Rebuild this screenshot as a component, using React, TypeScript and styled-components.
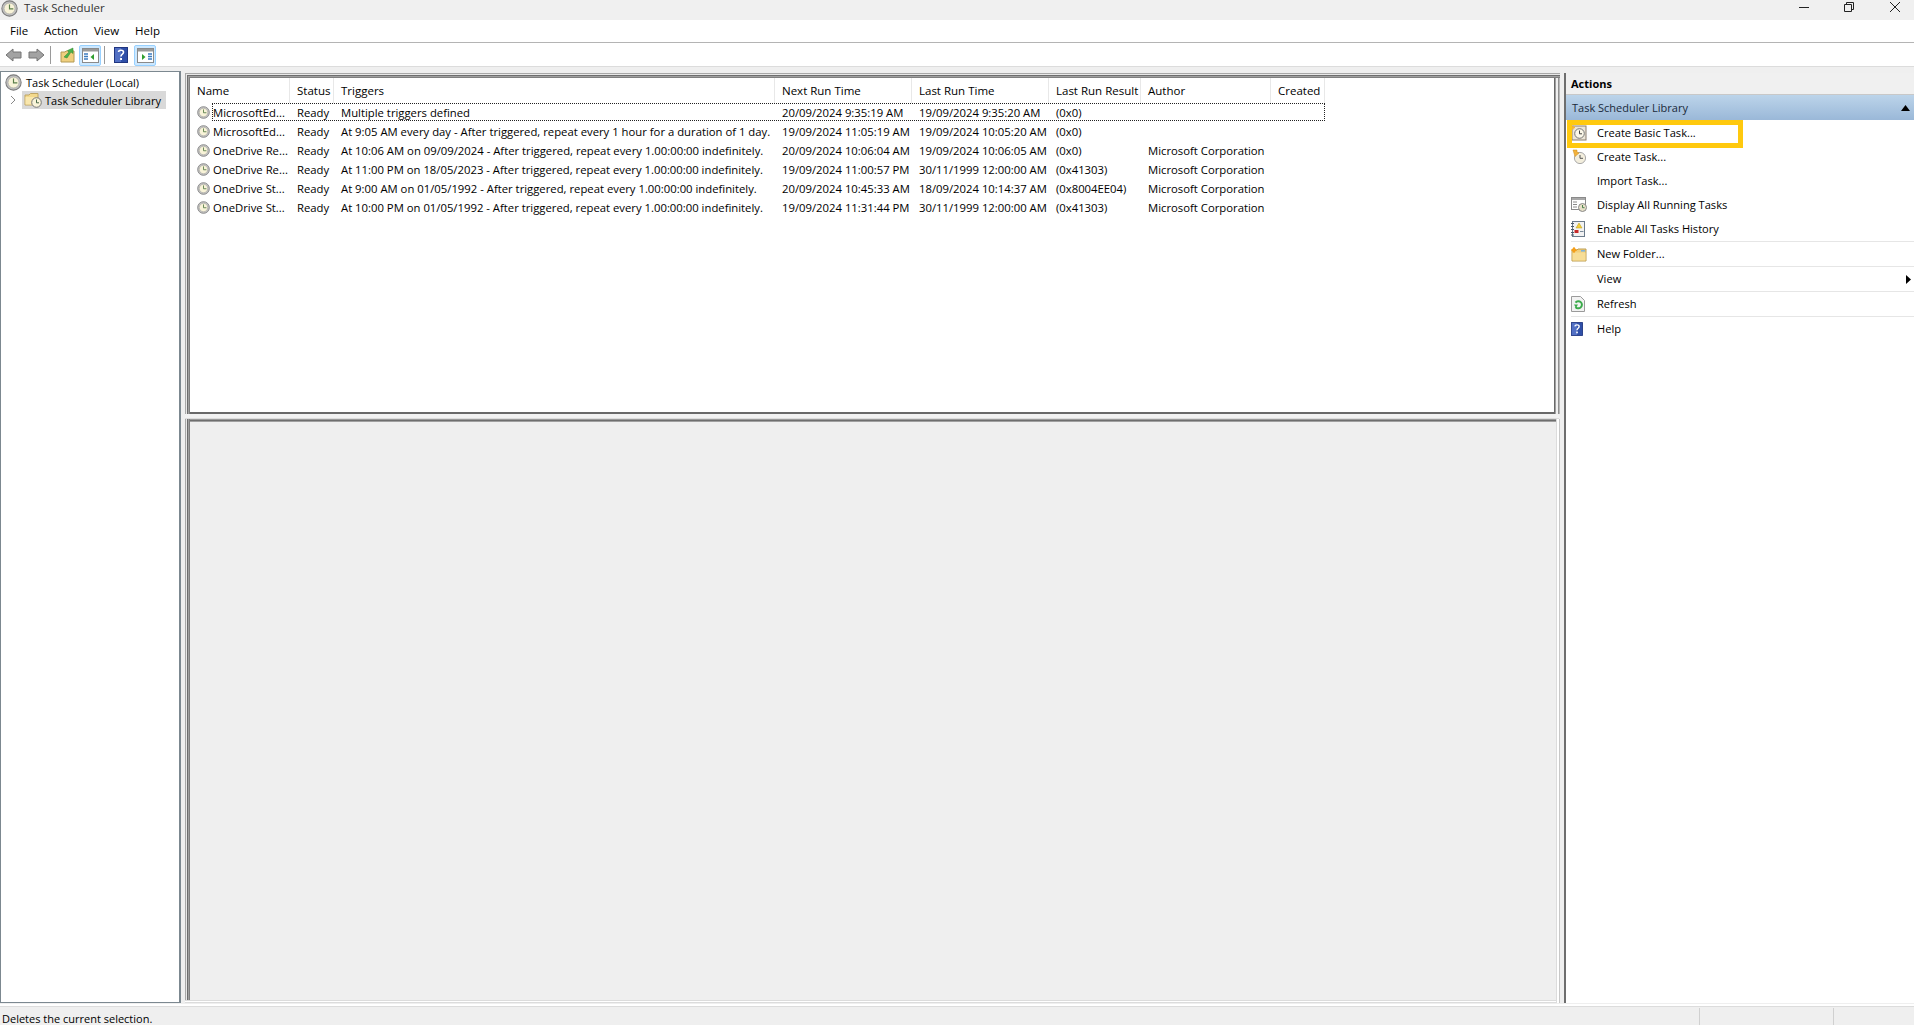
import React from "react";
import styled, { createGlobalStyle } from "styled-components";

const Global = createGlobalStyle`
  html, body { margin: 0; padding: 0; height: 100%; overflow: hidden; }
  body { font-family: "Open Sans", "Noto Sans", "Liberation Sans", sans-serif; font-size: 11.5px; color: #000; background: #efefef; }
  #root { height: 100%; }
`;

const Window = styled.div`
  width: 1914px; height: 1025px; display: flex; flex-direction: column; overflow: hidden;
`;
const TitleBar = styled.div`
  height: 20px; flex: none; background: #f0f0f0; display: flex; align-items: flex-start;
`;
const AppIcon = styled.span`
  display: flex; margin: 0 6px 0 1px;
`;
const TitleText = styled.span`
  font-size: 11.5px; color: #333; flex: 1; line-height: 16px;
`;
const WinButton = styled.span<{ $w: number }>`
  width: ${p => p.$w}px; display: flex; justify-content: center; align-items: flex-start; height: 20px;
`;
const MenuBar = styled.div`
  height: 22px; flex: none; background: #fff; border-bottom: 1px solid #b4b4b4; display: flex; align-items: center; padding-left: 10px; gap: 16px;
`;
const MenuItem = styled.span`
  line-height: 16px; padding-bottom: 1px;
`;
const Toolbar = styled.div`
  height: 22px; flex: none; background: #fff; border-bottom: 1px solid #dcdcdc; display: flex; align-items: center; padding-left: 5px; padding-top: 1px; box-sizing: content-box; margin-bottom: -1px;
`;
const ToolSep = styled.span<{ $ml: number }>`
  width: 1px; height: 18px; background: #9a9a9a; margin-left: ${p => p.$ml}px; flex: none;
`;
const ToolSlot = styled.span<{ $ml: number }>`
  display: flex; margin-left: ${p => p.$ml}px; flex: none;
`;
const ToolToggle = styled.span<{ $ml: number }>`
  width: 22px; height: 21px; box-sizing: border-box; display: flex; align-items: center; justify-content: center;
  margin-left: ${p => p.$ml}px; border-radius: 2px; border: 1px solid #99d1ff; background: #cce8ff; flex: none;
`;
const Main = styled.div`
  flex: 1; min-height: 0; display: flex; padding-top: 5px; border-bottom: 2px solid #fff;
`;
const TreePane = styled.div`
  width: 181px; flex: none; background: #fff; box-sizing: border-box; border: 1px solid #7c8890; border-right-width: 2px; margin-bottom: 1px; padding-top: 1px;
  display: flex; flex-direction: column; font-size: 11px;
`;
const TreeRow = styled.div<{ $indent: number }>`
  height: 18px; display: flex; align-items: center; padding-left: ${p => p.$indent}px;
`;
const TreeLabel = styled.span<{ $selected?: boolean; $gap: number }>`
  display: flex; align-items: center; gap: ${p => p.$gap}px; height: 18px; padding: 0 5px 0 2px;
  background: ${p => (p.$selected ? "#d9d9d9" : "transparent")};
`;
const Chevron = styled.span`
  display: flex; width: 12px; justify-content: center; margin-right: 3px;
`;
const Center = styled.div`
  width: 1375px; flex: none; margin: 2px 0 1px 4px; display: flex; flex-direction: column;
`;
const ListPane = styled.div`
  height: 341px; flex: none; box-sizing: border-box; background: #fff; padding: 5px 6px 2px 6px;
  box-shadow: inset 1px 1px 0 #a8a8a8, inset 2px 2px 0 #e8e8e8, inset 3px 3px 0 #6e6e6e, inset 4px 4px 0 #a0a0a0, inset 5px 5px 0 #808080,
    inset -1px 0 0 #b8b8b8, inset -2px 0 0 #909090, inset -3px 0 0 #f0f0f0, inset -4px 0 0 #f0f0f0, inset -5px 0 0 #a0a0a0, inset -6px 0 0 #696969,
    inset 0 -2px 0 #696969;
`;
const Splitter = styled.div`
  height: 4px; flex: none; background: #f2f2f2; border-bottom: 1px solid #dcdcdc; margin-right: 1px;
`;
const PreviewPane = styled.div`
  flex: 1; background: #efefef;
  box-shadow: inset -1px 0 0 #c8c8c8, inset -2px 0 0 #fff, inset -3px 0 0 #fff, inset -4px 0 0 #dcdcdc,
    inset 0 -1px 0 #dcdcdc, inset 0 -2px 0 #fff, inset 0 -3px 0 #dcdcdc,
    inset 1px 0 0 #a8a8a8, inset 2px 0 0 #e8e8e8, inset 3px 0 0 #6e6e6e, inset 4px 0 0 #a0a0a0, inset 5px 0 0 #808080,
    inset 0 1px 0 #9a9a9a, inset 0 2px 0 #6e6e6e, inset 0 3px 0 #a0a0a0;
`;
const columns = "99px 44px 441px 137px 137px 92px 130px 54px";
const HeaderRow = styled.div`
  display: grid; grid-template-columns: ${columns}; height: 25px; width: 1134px;
`;
const HeaderCell = styled.div<{ $first?: boolean }>`
  padding-left: ${p => (p.$first ? 6 : 7)}px; line-height: 25px; border-right: 1px solid #e8e8e8; white-space: nowrap; overflow: hidden;
`;
const Row = styled.div<{ $focus?: boolean }>`
  display: grid; grid-template-columns: ${columns}; height: 19px; width: 1134px; position: relative; align-items: center; font-size: 11.3px;
  &::after {
    content: ""; display: ${p => (p.$focus ? "block" : "none")}; position: absolute; left: 21px; right: 0; top: 0; height: 18px; border: 1px dotted #222; box-sizing: border-box;
  }
`;
const Cell = styled.div`
  padding-left: 7px; white-space: nowrap; line-height: 17px;
`;
const NameCell = styled(Cell)`
  padding-left: 6px; display: flex; align-items: center; gap: 3px;
`;
const ActionsPane = styled.div`
  flex: 1; margin: 2px 0 1px 4px; background: #fff; border-left: 2px solid #6e6e6e; display: flex; flex-direction: column;
`;
const ActionsTitle = styled.div`
  height: 21px; flex: none; background: #f0f0f0; font-weight: 700; line-height: 21px; padding-left: 5px; font-size: 11px; border-bottom: 1px solid #c8c8c8;
`;
const SectionHeader = styled.div`
  height: 25px; flex: none; background: linear-gradient(#bcd4ea, #9ab8d8); display: flex; align-items: center; justify-content: space-between; padding: 0 4px 0 6px; color: #1a2a3a; font-size: 11px;
`;
const ActionList = styled.div`
  position: relative; display: flex; flex-direction: column; padding-top: 1px; font-size: 11.1px;
`;
const ActionRow = styled.div<{ $sep?: boolean; $h: number }>`
  height: ${p => p.$h}px; box-sizing: border-box; display: flex; align-items: center; margin-left: 5px; padding-right: 3px;
  border-bottom: 1px solid ${p => (p.$sep ? "#e6e6e6" : "transparent")};
`;
const ActionIcon = styled.span`
  width: 26px; flex: none; display: flex;
`;
const ActionLabel = styled.span`
  flex: 1; line-height: 16px;
`;
const Highlight = styled.div`
  position: absolute; left: 1px; top: 0; width: 176px; height: 28px; box-sizing: border-box; border: 5px solid #ffc90e;
`;
const StatusBar = styled.div`
  height: 19px; box-sizing: border-box; flex: none; background: #efefef; display: flex; align-items: stretch; border-top: 1px solid #dcdcdc;
`;
const StatusMain = styled.div`
  width: 1699px; padding: 5px 0 0 2px; box-sizing: border-box; line-height: 13px; flex: none; font-size: 11px;
`;
const StatusCell = styled.div<{ $w: number }>`
  width: ${p => p.$w}px; flex: none; border-left: 1px solid #d0d0d0; margin-top: 1px;
`;

const Clock = ({ size = 13 }: { size?: number }) => (
  <svg width={size} height={size} viewBox="0 0 16 16">
    <circle cx="8" cy="8" r="7.2" fill="#c4c4c4" stroke="#7d7d7d" />
    <circle cx="8" cy="8" r="5.2" fill="#f8f3d8" stroke="#9a9a9a" strokeWidth="0.6" />
    <path d="M8 4.2V8.3H11.6" fill="none" stroke="#5a7f4a" strokeWidth="1.1" />
  </svg>
);
const Back = ({ flip }: { flip?: boolean }) => (
  <svg width="17" height="14" viewBox="0 0 17 14" style={flip ? { transform: "scaleX(-1)" } : undefined}>
    <path d="M1 7 8 1V4H16V10H8V13Z" fill="#a3a3a3" stroke="#757575" />
  </svg>
);
const FolderUp = () => (
  <svg width="16" height="16" viewBox="0 0 16 16">
    <path d="M1 5H5L6 4H14V15H1Z" fill="#f0cf7e" stroke="#b39a55" />
    <path d="M4 10 9 5 7.5 3.5 13 1V6.5L11 5 7 11Z" fill="#4cb04a" stroke="#2c8a2c" strokeWidth=".5" />
  </svg>
);
const PanelIcon = ({ right }: { right?: boolean }) => (
  <svg width="17" height="15" viewBox="0 0 17 15">
    <rect x=".5" y=".5" width="16" height="14" fill="#fff" stroke="#8a8a8a" />
    <rect x="1" y="1" width="15" height="2.5" fill="#9a9a9a" />
    {right ? (
      <>
        <path d="M5 6V12L8.5 9Z" fill="#2f9e2f" />
        <path d="M11 6H15M11 8.5H15M11 11H15" stroke="#3c7cc0" strokeWidth="1.3" />
      </>
    ) : (
      <>
        <path d="M2 6H6M2 8.5H6M2 11H6" stroke="#3c7cc0" strokeWidth="1.3" />
        <path d="M12 6V12L8.5 9Z" fill="#2f9e2f" />
      </>
    )}
  </svg>
);
const HelpIcon = ({ size = 14 }: { size?: number }) => (
  <svg width={size} height={size + 2} viewBox="0 0 14 16">
    <rect x=".5" y=".5" width="13" height="15" fill="#2f4fa8" stroke="#1f3580" />
    <rect x="1" y="1" width="6" height="14" fill="#5270c4" />
    <path d="M4.5 5C4.8 2.6 9.5 2.6 9.5 5.2 9.5 7.2 7 7.2 7 9.5" fill="none" stroke="#fff" strokeWidth="1.6" />
    <rect x="6.1" y="11" width="1.9" height="2" fill="#fff" />
  </svg>
);
const FolderClock = () => (
  <svg width="18" height="16" viewBox="0 0 18 16">
    <path d="M1 3H5L6.5 1.5H14V13H1Z" fill="#f3d98c" stroke="#bfa564" />
    <path d="M1.5 5H13.5V12.5H1.5Z" fill="#f9e7ad" />
    <circle cx="12.5" cy="10.5" r="4.8" fill="#f8f3d8" stroke="#777" />
    <path d="M12.5 7.5V10.8H15" fill="none" stroke="#4a6a4a" />
  </svg>
);
const BasicTask = () => (
  <svg width="16" height="16" viewBox="0 0 16 16">
    <rect x="1" y="1" width="14" height="14" fill="#ece6d8" stroke="#8a7f70" />
    <circle cx="8.5" cy="8.5" r="4.8" fill="#fbf7e8" stroke="#777" />
    <path d="M8.5 5.5V8.8H11" fill="none" stroke="#444" />
    <path d="M0 2.5H4M2 .5V4.5" stroke="#f5b335" strokeWidth="1.4" />
  </svg>
);
const CreateTask = () => (
  <svg width="16" height="16" viewBox="0 0 16 16">
    <circle cx="9" cy="9" r="5.6" fill="#f3eedd" stroke="#a9a9a9" />
    <path d="M9 6V9.3H12" fill="none" stroke="#555" />
    <path d="M2 1H6V3L8 4 4 7.5Z" fill="#f3b13a" stroke="#c88a1a" strokeWidth=".5" />
  </svg>
);
const RunningTasks = () => (
  <svg width="16" height="15" viewBox="0 0 16 15">
    <rect x=".5" y=".5" width="14" height="12" fill="#fff" stroke="#8a8a8a" />
    <rect x="1" y="1" width="13" height="2" fill="#a8a8a8" />
    <path d="M2 5H6M2 7.5H6M2 10H6" stroke="#8a8a8a" />
    <circle cx="11.5" cy="10.5" r="4" fill="#e6e0c8" stroke="#888" />
    <path d="M11.5 8V10.7H13.5" fill="none" stroke="#4a7f4a" />
  </svg>
);
const HistoryIcon = () => (
  <svg width="15" height="16" viewBox="0 0 15 16">
    <rect x="1.5" y=".5" width="12" height="15" fill="#f2f2f2" stroke="#6a7a8a" />
    <path d="M0 2.5H3M0 5.5H3M0 8.5H3M0 11.5H3M0 14H3" stroke="#4a5a6a" />
    <path d="M8 2 11 7H5Z" fill="#f4d03a" stroke="#b89a1a" strokeWidth=".5" />
    <rect x="3.5" y="9" width="4" height="3" fill="#c62828" />
    <path d="M9 10.5H12.5" stroke="#7a8a9a" />
  </svg>
);
const NewFolder = () => (
  <svg width="16" height="15" viewBox="0 0 16 15">
    <path d="M1 3H6L7 2H15V14H1Z" fill="#f2cf7c" stroke="#bd9f55" />
    <path d="M1.5 5.5H14.5V13.5H1.5Z" fill="#f7dd96" />
    <path d="M1 3 3 1 5 3 3 5Z M0 3H6M3 0V6" stroke="#f59f1a" strokeWidth="1.2" />
    <rect x="10" y="3" width="4" height="1.6" fill="#7cb4dc" />
  </svg>
);
const RefreshIcon = () => (
  <svg width="14" height="16" viewBox="0 0 14 16">
    <path d="M.5.5H9.5L13.5 4.5V15.5H.5Z" fill="#f2f2f2" stroke="#9a9a9a" />
    <path d="M4.5 6.5A3.6 3.6 0 1 1 4.5 11" fill="none" stroke="#3aaa4a" strokeWidth="2" />
    <path d="M3 8.5 7 8.5 5 12Z" fill="#3aaa4a" />
  </svg>
);

const actions: { label: string; icon: React.ReactNode; h: number; sep?: boolean; arrow?: boolean }[] = [
  { label: "Create Basic Task...", icon: <BasicTask />, h: 25 },
  { label: "Create Task...", icon: <CreateTask />, h: 23 },
  { label: "Import Task...", icon: null, h: 24 },
  { label: "Display All Running Tasks", icon: <RunningTasks />, h: 24 },
  { label: "Enable All Tasks History", icon: <HistoryIcon />, h: 25, sep: true },
  { label: "New Folder...", icon: <NewFolder />, h: 25, sep: true },
  { label: "View", icon: null, h: 25, sep: true, arrow: true },
  { label: "Refresh", icon: <RefreshIcon />, h: 25, sep: true },
  { label: "Help", icon: <HelpIcon size={12} />, h: 25 },
];

const tasks = [
  ["MicrosoftEd...", "Ready", "Multiple triggers defined", "20/09/2024 9:35:19 AM", "19/09/2024 9:35:20 AM", "(0x0)", ""],
  ["MicrosoftEd...", "Ready", "At 9:05 AM every day - After triggered, repeat every 1 hour for a duration of 1 day.", "19/09/2024 11:05:19 AM", "19/09/2024 10:05:20 AM", "(0x0)", ""],
  ["OneDrive Re...", "Ready", "At 10:06 AM on 09/09/2024 - After triggered, repeat every 1.00:00:00 indefinitely.", "20/09/2024 10:06:04 AM", "19/09/2024 10:06:05 AM", "(0x0)", "Microsoft Corporation"],
  ["OneDrive Re...", "Ready", "At 11:00 PM on 18/05/2023 - After triggered, repeat every 1.00:00:00 indefinitely.", "19/09/2024 11:00:57 PM", "30/11/1999 12:00:00 AM", "(0x41303)", "Microsoft Corporation"],
  ["OneDrive St...", "Ready", "At 9:00 AM on 01/05/1992 - After triggered, repeat every 1.00:00:00 indefinitely.", "20/09/2024 10:45:33 AM", "18/09/2024 10:14:37 AM", "(0x8004EE04)", "Microsoft Corporation"],
  ["OneDrive St...", "Ready", "At 10:00 PM on 01/05/1992 - After triggered, repeat every 1.00:00:00 indefinitely.", "19/09/2024 11:31:44 PM", "30/11/1999 12:00:00 AM", "(0x41303)", "Microsoft Corporation"],
];
const headers = ["Name", "Status", "Triggers", "Next Run Time", "Last Run Time", "Last Run Result", "Author", "Created"];

export default function App() {
  return (
    <Window>
      <Global />
      <TitleBar>
        <AppIcon><Clock size={17} /></AppIcon>
        <TitleText>Task Scheduler</TitleText>
        <WinButton $w={36}>
          <svg width="12" height="14" viewBox="0 0 12 14"><path d="M1 7.5H11" stroke="#222" /></svg>
        </WinButton>
        <WinButton $w={54}>
          <svg width="12" height="14" viewBox="0 0 12 14"><path d="M1.5 4.5H8.5V11.5H1.5ZM3.5 4.5V2.5H10.5V9.5H8.5" fill="none" stroke="#222" /></svg>
        </WinButton>
        <WinButton $w={38}>
          <svg width="12" height="14" viewBox="0 0 12 14"><path d="M1 2 11 12M11 2 1 12" stroke="#222" /></svg>
        </WinButton>
      </TitleBar>
      <MenuBar>
        <MenuItem>File</MenuItem>
        <MenuItem>Action</MenuItem>
        <MenuItem>View</MenuItem>
        <MenuItem>Help</MenuItem>
      </MenuBar>
      <Toolbar>
        <ToolSlot $ml={0}><Back /></ToolSlot>
        <ToolSlot $ml={6}><Back flip /></ToolSlot>
        <ToolSep $ml={5} />
        <ToolSlot $ml={9}><FolderUp /></ToolSlot>
        <ToolToggle $ml={3}><PanelIcon /></ToolToggle>
        <ToolSep $ml={3} />
        <ToolSlot $ml={9}><HelpIcon /></ToolSlot>
        <ToolToggle $ml={6}><PanelIcon right /></ToolToggle>
      </Toolbar>
      <Main>
        <TreePane>
          <TreeRow $indent={2}>
            <TreeLabel $gap={4}><Clock size={17} />Task Scheduler (Local)</TreeLabel>
          </TreeRow>
          <TreeRow $indent={6}>
            <Chevron>
              <svg width="6" height="10" viewBox="0 0 6 10"><path d="M1 1 5 5 1 9" fill="none" stroke="#888" /></svg>
            </Chevron>
            <TreeLabel $selected $gap={3}><FolderClock />Task Scheduler Library</TreeLabel>
          </TreeRow>
        </TreePane>
        <Center>
          <ListPane>
            <HeaderRow>
              {headers.map((h, i) => <HeaderCell key={h} $first={i === 0}>{h}</HeaderCell>)}
            </HeaderRow>
            {tasks.map((t, i) => (
              <Row key={i} $focus={i === 0}>
                <NameCell><Clock />{t[0]}</NameCell>
                <Cell>{t[1]}</Cell>
                <Cell>{t[2]}</Cell>
                <Cell>{t[3]}</Cell>
                <Cell>{t[4]}</Cell>
                <Cell>{t[5]}</Cell>
                <Cell>{t[6]}</Cell>
                <Cell />
              </Row>
            ))}
          </ListPane>
          <Splitter />
          <PreviewPane />
        </Center>
        <ActionsPane>
          <ActionsTitle>Actions</ActionsTitle>
          <SectionHeader>
            Task Scheduler Library
            <svg width="9" height="6" viewBox="0 0 9 6"><path d="M0 6 4.5 0 9 6Z" fill="#000" /></svg>
          </SectionHeader>
          <ActionList>
            {actions.map(a => (
              <ActionRow key={a.label} $h={a.h} $sep={a.sep}>
                <ActionIcon>{a.icon}</ActionIcon>
                <ActionLabel>{a.label}</ActionLabel>
                {a.arrow && <svg width="5" height="9" viewBox="0 0 5 9"><path d="M0 0 5 4.5 0 9Z" fill="#000" /></svg>}
              </ActionRow>
            ))}
            <Highlight />
          </ActionList>
        </ActionsPane>
      </Main>
      <StatusBar>
        <StatusMain>Deletes the current selection.</StatusMain>
        <StatusCell $w={133} />
        <StatusCell $w={82} />
      </StatusBar>
    </Window>
  );
}
